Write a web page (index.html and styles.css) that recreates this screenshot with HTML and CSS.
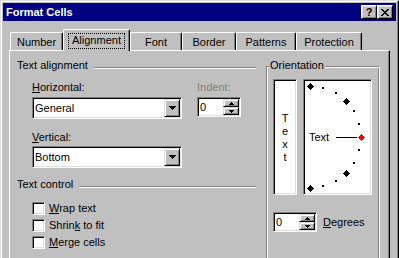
FILE: index.html
```html
<!DOCTYPE html>
<html lang="en">

  <head>
    <meta charset="UTF-8">
    <title>Format Cells</title>
    <link rel="stylesheet" href="styles.css">
  </head>

  <body>
    <div class="window">
      <div class="window__frame">

        <div class="titlebar">
          <span class="titlebar__text">Format Cells</span>
          <div class="titlebar__btns">
            <div class="tbtn">?</div>
            <div class="tbtn">
              <svg width="8" height="7" viewBox="0 0 8 7" shape-rendering="crispEdges">
                <path d="M0 0h2v1h-2z M6 0h2v1h-2z M1 1h2v1h-2z M5 1h2v1h-2z M2 2h4v1h-4z M3 3h2v1h-2z M2 4h4v1h-4z M1 5h2v1h-2z M5 5h2v1h-2z M0 6h2v1h-2z M6 6h2v1h-2z" fill="#000"/>
              </svg>
            </div>
          </div>
        </div>

        <div class="dialog">
          <div class="tabs">
            <div class="tab tab--number">Number</div>
            <div class="tab tab--active"><span class="tab__focus">Alignment</span></div>
            <div class="tab tab--font">Font</div>
            <div class="tab tab--border">Border</div>
            <div class="tab tab--patterns">Patterns</div>
            <div class="tab tab--protection">Protection</div>
          </div>

          <div class="panel">

            <div class="left__col">
              <div class="group__head">
                <span>Text alignment</span>
                <div class="group__line"></div>
              </div>

              <div class="field__row">
                <div class="field">
                  <div class="field__label"><u>H</u>orizontal:</div>
                  <div class="combo">
                    <span class="combo__text">General</span>
                    <div class="combo__btn">
                      <svg width="7" height="4" viewBox="0 0 7 4" shape-rendering="crispEdges">
                        <path d="M0 0h7v1h-7z M1 1h5v1h-5z M2 2h3v1h-3z M3 3h1v1h-1z" fill="#000"/>
                      </svg>
                    </div>
                  </div>
                </div>
                <div class="field">
                  <div class="field__label label--disabled">Indent:</div>
                  <div class="spin">
                    <span class="spin__val">0</span>
                    <div class="spin__btns">
                      <div class="spin__btn">
                        <svg width="5" height="3" viewBox="0 0 5 3" shape-rendering="crispEdges">
                          <path d="M2 0h1v1h-1z M1 1h3v1h-3z M0 2h5v1h-5z" fill="#000"/>
                        </svg>
                      </div>
                      <div class="spin__btn">
                        <svg width="5" height="3" viewBox="0 0 5 3" shape-rendering="crispEdges">
                          <path d="M0 0h5v1h-5z M1 1h3v1h-3z M2 2h1v1h-1z" fill="#000"/>
                        </svg>
                      </div>
                    </div>
                  </div>
                </div>
              </div>

              <div class="field field--vert">
                <div class="field__label"><u>V</u>ertical:</div>
                <div class="combo">
                  <span class="combo__text">Bottom</span>
                  <div class="combo__btn">
                    <svg width="7" height="4" viewBox="0 0 7 4" shape-rendering="crispEdges">
                      <path d="M0 0h7v1h-7z M1 1h5v1h-5z M2 2h3v1h-3z M3 3h1v1h-1z" fill="#000"/>
                    </svg>
                  </div>
                </div>
              </div>

              <div class="group__head group__head--control">
                <span>Text control</span>
                <div class="group__line"></div>
              </div>

              <div class="checks">
                <div class="check"><div class="check__box"></div><span><u>W</u>rap text</span></div>
                <div class="check"><div class="check__box"></div><span>Shrin<u>k</u> to fit</span></div>
                <div class="check"><div class="check__box"></div><span><u>M</u>erge cells</span></div>
              </div>
            </div>

            <fieldset class="orient">
              <legend class="orient__legend">Orientation</legend>
              <div class="orient__body">
                <div class="orient__top">
                  <div class="vtext">
                    <span>T</span>
                    <span>e</span>
                    <span>x</span>
                    <span>t</span>
                  </div>
                  <div class="dial">
                    <svg width="65" height="112" viewBox="0 0 65 112" shape-rendering="crispEdges">
                      <defs>
                        <path id="dia" d="M3 0h1v1h-1z M2 1h3v1h-3z M1 2h5v1h-5z M0 3h7v1h-7z M1 4h5v1h-5z M2 5h3v1h-3z M3 6h1v1h-1z"/>
                      </defs>
                      <!-- big marks every 45 degrees -->
                      <use href="#dia" x="2" y="2" fill="#000"/>
                      <use href="#dia" x="38" y="17" fill="#000"/>
                      <use href="#dia" x="53" y="53" fill="#ff0000"/>
                      <use href="#dia" x="38" y="89" fill="#000"/>
                      <use href="#dia" x="2" y="104" fill="#000"/>
                      <!-- small marks every 15 degrees -->
                      <g fill="#000">
                        <rect x="17" y="6" width="2" height="2"/>
                        <rect x="30" y="11" width="2" height="2"/>
                        <rect x="48" y="29" width="2" height="2"/>
                        <rect x="53" y="42" width="2" height="2"/>
                        <rect x="53" y="68" width="2" height="2"/>
                        <rect x="48" y="81" width="2" height="2"/>
                        <rect x="30" y="99" width="2" height="2"/>
                        <rect x="17" y="104" width="2" height="2"/>
                        <rect x="31" y="56" width="21" height="1"/>
                      </g>
                      <text x="4" y="60" font-family="Liberation Sans, Arial, sans-serif" font-size="11" fill="#000">Text</text>
                    </svg>
                  </div>
                </div>

                <div class="degrees">
                  <div class="spin">
                    <span class="spin__val">0</span>
                    <div class="spin__btns">
                      <div class="spin__btn">
                        <svg width="5" height="3" viewBox="0 0 5 3" shape-rendering="crispEdges">
                          <path d="M2 0h1v1h-1z M1 1h3v1h-3z M0 2h5v1h-5z" fill="#000"/>
                        </svg>
                      </div>
                      <div class="spin__btn">
                        <svg width="5" height="3" viewBox="0 0 5 3" shape-rendering="crispEdges">
                          <path d="M0 0h5v1h-5z M1 1h3v1h-3z M2 2h1v1h-1z" fill="#000"/>
                        </svg>
                      </div>
                    </div>
                  </div>
                  <span><u>D</u>egrees</span>
                </div>
              </div>
            </fieldset>

          </div>
        </div>

      </div>
    </div>
  </body>

</html>
```

FILE: styles.css
```css
* {
  margin: 0;
  padding: 0;
  box-sizing: border-box;
}

body {
  width: 399px;
  height: 258px;
  overflow: hidden;
  background-color: #c0c0c0;
  font-family: "Liberation Sans", Arial, sans-serif;
  font-size: 11px;
  line-height: 13px;
  color: #000;
}

/* window frame */
.window {
  width: 399px;
  height: 300px;
  border: 1px solid;
  border-color: #dfdfdf #000 #000 #dfdfdf;
}

.window__frame {
  height: 100%;
  padding: 1px;
  border: 1px solid;
  border-color: #fff #808080 #808080 #fff;
}

.titlebar {
  display: flex;
  align-items: center;
  justify-content: space-between;
  height: 18px;
  padding: 0 3px;
  background-color: #000080;
  color: #fff;
}

.titlebar__text {
  font-weight: bold;
}

.titlebar__btns {
  display: flex;
}

.tbtn {
  display: flex;
  align-items: center;
  justify-content: center;
  width: 16px;
  height: 14px;
  background-color: #c0c0c0;
  border: 1px solid;
  border-color: #fff #000 #000 #fff;
  box-shadow: inset 1px 1px #dfdfdf, inset -1px -1px #808080;
  color: #000;
  font-weight: bold;
}

/* tabs */
.dialog {
  padding: 8px 6px 0;
}

.tabs {
  display: flex;
  align-items: flex-end;
  height: 21px;
  padding-left: 1px;
}

.tab {
  height: 18px;
  padding-top: 3px;
  text-align: center;
  border-top: 1px solid #fff;
  border-left: 1px solid #fff;
  border-right: 1px solid #000;
  border-radius: 2px 2px 0 0;
  box-shadow: inset -1px 0 #808080;
}

.tab--number { width: 53px; }
.tab--font { width: 52px; }
.tab--border { width: 54px; }
.tab--patterns { width: 60px; }
.tab--protection { width: 66px; }

.tab--active {
  position: relative;
  z-index: 1;
  width: 67px;
  height: 22px;
  margin-bottom: -1px;
  background-color: #c0c0c0;
}

.tab__focus {
  display: inline-block;
  padding: 0 3px 1px;
  border: 1px dotted #000;
}

.panel {
  display: flex;
  align-items: flex-start;
  gap: 10px;
  height: 230px;
  padding: 8px 8px 0 7px;
  border-top: 1px solid #fff;
  border-left: 1px solid #fff;
  border-right: 1px solid #000;
  box-shadow: inset -1px 0 #808080;
}

/* left column */
.left__col {
  width: 239px;
}

.group__head {
  display: flex;
}

.group__head--control {
  margin-top: 10px;
}

.group__line {
  flex: 1;
  height: 2px;
  margin: 8px 0 0 6px;
  border-top: 1px solid #808080;
  border-bottom: 1px solid #fff;
}

.field__row {
  display: flex;
  gap: 15px;
  margin-top: 9px;
  padding-left: 15px;
}

.field__label {
  margin-bottom: 3px;
}

.field--vert {
  margin-top: 12px;
  padding-left: 15px;
}

.field--vert .field__label {
  margin-bottom: 2px;
}

.label--disabled {
  color: #808080;
}

.combo {
  display: flex;
  width: 150px;
  height: 22px;
  padding: 1px 1px 1px 2px;
  background-color: #fff;
  border: 1px solid;
  border-color: #808080 #fff #fff #808080;
  box-shadow: inset 1px 1px #000, inset -1px -1px #dfdfdf;
}

.combo__text {
  flex: 1;
  align-self: center;
}

.combo__btn,
.spin__btn {
  display: flex;
  align-items: center;
  justify-content: center;
  background-color: #c0c0c0;
  border: 1px solid;
  border-color: #dfdfdf #000 #000 #dfdfdf;
  box-shadow: inset 1px 1px #fff, inset -1px -1px #808080;
}

.combo__btn {
  width: 16px;
}

.spin {
  display: flex;
  width: 44px;
  height: 20px;
  padding: 1px;
  background-color: #fff;
  border: 1px solid;
  border-color: #808080 #fff #fff #808080;
  box-shadow: inset 1px 1px #000, inset -1px -1px #dfdfdf;
}

.spin__val {
  flex: 1;
  align-self: center;
  padding-left: 1px;
}

.spin__btns {
  display: flex;
  flex-direction: column;
  width: 16px;
}

.spin__btn {
  flex: 1;
}

.checks {
  display: flex;
  flex-direction: column;
  gap: 4px;
  margin-top: 11px;
  padding-left: 15px;
}

.check {
  display: flex;
  gap: 4px;
}

.check__box {
  width: 13px;
  height: 13px;
  background-color: #fff;
  border: 1px solid;
  border-color: #808080 #fff #fff #808080;
  box-shadow: inset 1px 1px #000, inset -1px -1px #dfdfdf;
}

/* orientation group */
.orient {
  width: 114px;
  min-width: 0;
  height: 210px;
  padding: 0;
  border: 1px solid;
  border-color: #808080 #fff #fff #808080;
  box-shadow: inset 1px 1px #fff, inset -1px -1px #808080;
}

.orient__legend {
  margin-left: 2px;
  padding: 0 1px 2px;
  background-color: #c0c0c0;
}

.orient__body {
  padding: 5px 0 0 6px;
}

.orient__top {
  display: flex;
  gap: 6px;
}

.vtext,
.dial {
  height: 116px;
  background-color: #fff;
  border: 1px solid;
  border-color: #808080 #fff #fff #808080;
  box-shadow: inset 1px 1px #000, inset -1px -1px #dfdfdf;
}

.vtext {
  display: flex;
  flex-direction: column;
  align-items: center;
  width: 24px;
  padding-top: 32px;
}

.dial {
  width: 69px;
  padding: 1px;
}

.dial svg {
  display: block;
}

.degrees {
  display: flex;
  align-items: center;
  gap: 6px;
  margin-top: 17px;
}
```
